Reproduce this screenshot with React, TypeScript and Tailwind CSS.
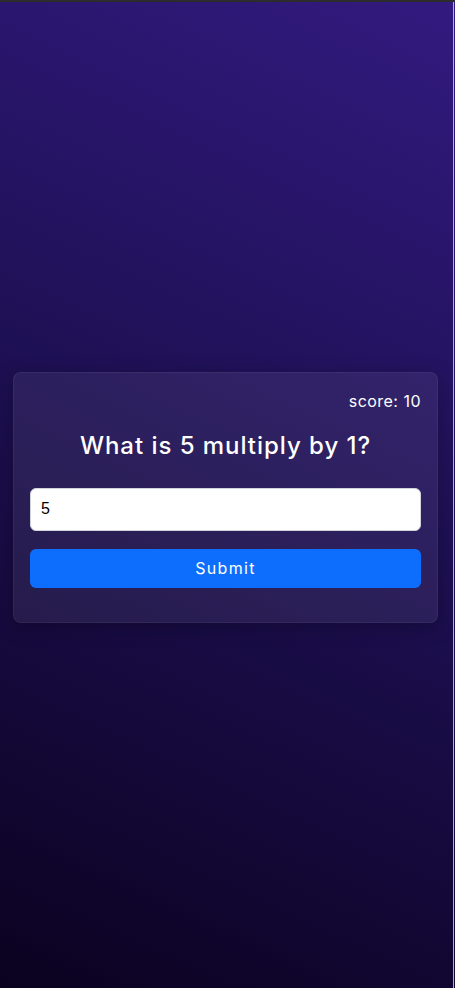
import React from "react";

export default function App() {
  return (
    <div className="relative min-h-screen w-full bg-[linear-gradient(25deg,#0b0220,#1c0f50_50%,#321a7f)] border-t-2 border-[#2c2c2c] flex items-center font-['Inter',sans-serif]">
      <div className="absolute right-[1px] top-0 bottom-0 w-[1px] bg-[#b8a8e8]" />
      <div className="ml-[13px] mt-[4px] w-[425px] rounded-lg border border-white/5 bg-white/[0.07] shadow-[0_4px_20px_rgba(0,0,0,0.25)] px-4 pt-4 pb-[34px]">
        <div className="text-right text-white text-[16px] leading-6 tracking-[0.03em]">score: 10</div>
        <h3 className="mt-[18px] text-center text-white text-[24px] font-medium leading-[29px] tracking-[0.04em]">
          What is 5 multiply by 1?
        </h3>
        <input
          className="mt-[28px] block w-full h-[43px] rounded-md bg-white border border-[#ced4da] px-[10px] text-[16px] text-black font-['Liberation_Sans',sans-serif] outline-none"
          defaultValue="5"
        />
        <button className="mt-[18px] block w-full h-[39px] rounded-md bg-[#0d6efd] text-white text-[16px] tracking-[0.08em]">
          Submit
        </button>
      </div>
    </div>
  );
}
